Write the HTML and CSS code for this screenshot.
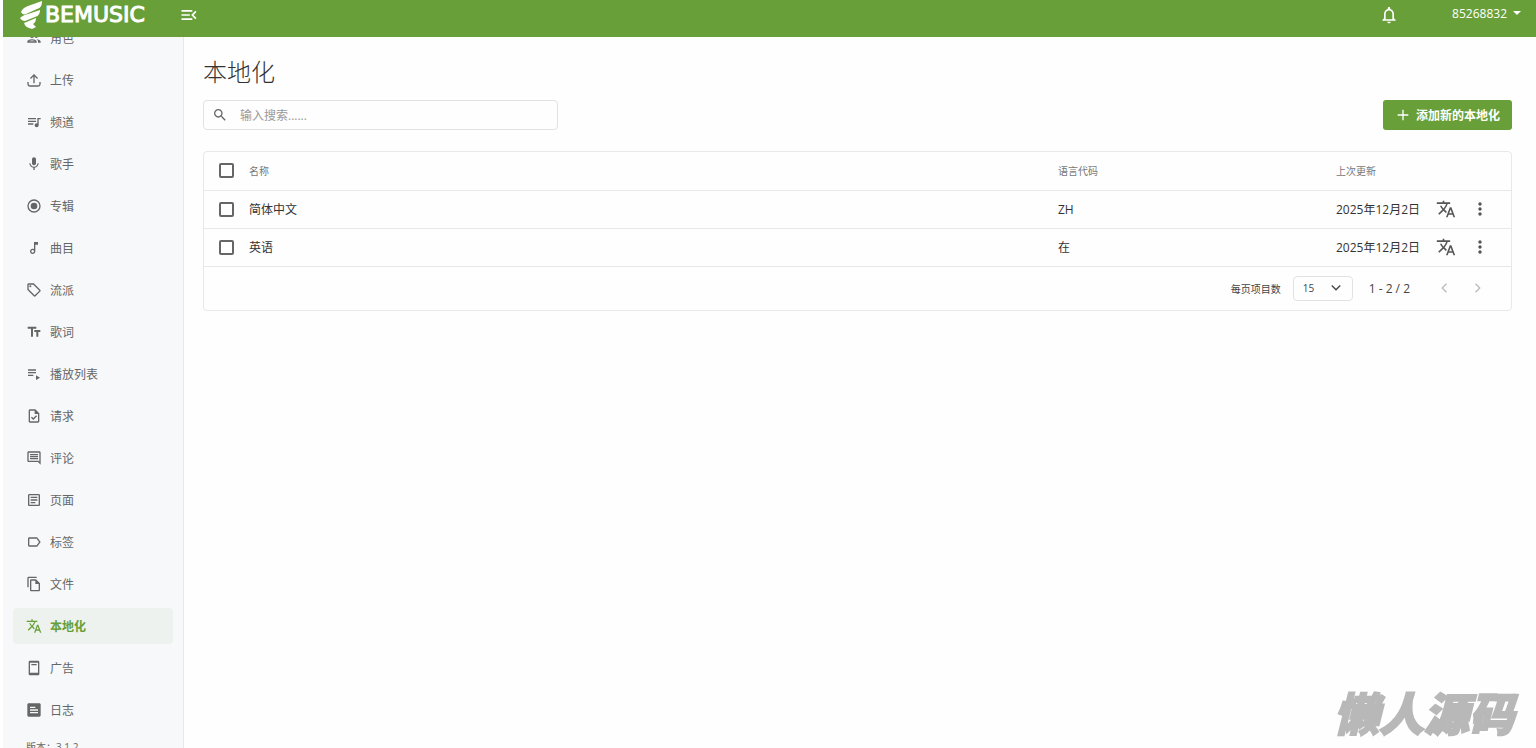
FILE: index.html
```html
<!DOCTYPE html>
<html lang="zh-CN">
<head>
    <meta charset="UTF-8">
    <meta name="viewport" content="width=device-width, initial-scale=1">
    <title>本地化</title>
    <link rel="stylesheet" href="styles.css">
</head>
<body>
    <svg class="sprite" aria-hidden="true">
        <symbol id="translate" viewBox="0 0 24 24"><path d="M12.87 15.07l-2.54-2.51.03-.03c1.74-1.94 2.98-4.17 3.71-6.53H17V4h-7V2H8v2H1v1.99h11.17C11.5 7.92 10.44 9.75 9 11.35 8.07 10.32 7.3 9.19 6.69 8h-2c.73 1.63 1.73 3.17 2.98 4.56l-5.09 5.02L4 19l5-5 3.11 3.11.76-2.04zM18.5 10h-2L12 22h2l1.12-3h4.75L21 22h2l-4.5-12zm-2.62 7l1.62-4.33L19.12 17h-3.24z"/></symbol>
        <symbol id="more" viewBox="0 0 24 24"><path d="M12 8c1.1 0 2-.9 2-2s-.9-2-2-2-2 .9-2 2 .9 2 2 2zm0 2c-1.1 0-2 .9-2 2s.9 2 2 2 2-.9 2-2-.9-2-2-2zm0 6c-1.1 0-2 .9-2 2s.9 2 2 2 2-.9 2-2-.9-2-2-2z"/></symbol>
    </svg>

    <header class="topbar">
        <a href="#" class="logo">
            <svg class="logo-mark" viewBox="0 0 24 30"><path d="M1 12C2 9 5 7 8 6L22 1C22 5 21 8 17 9L6 14C4 15 2 14 1 12zM0 18C2 16 4 15 8 14L20 10C20 13 19 16 15 17L5 21C3 21 1 20 0 18zM4 23L16 18C16 21 15 23 13 24L16 27L12 29C9 28 5 27 4 23z"/></svg>
            <span>BEMUSIC</span>
        </a>
        <button class="icon-btn menu-btn" aria-label="菜单">
            <svg class="icon-lg" viewBox="0 0 24 24"><path d="M3 18h13v-2H3v2zm0-5h10v-2H3v2zm0-7v2h13V6H3zm18 9.59L17.42 12 21 8.41 19.59 7l-5 5 5 5L21 15.59z"/></svg>
        </button>
        <button class="icon-btn bell-btn" aria-label="通知">
            <svg class="icon-lg" viewBox="0 0 24 24"><path d="M12 22c1.1 0 2-.9 2-2h-4c0 1.1.9 2 2 2zm6-6v-5c0-3.07-1.63-5.64-4.5-6.32V4c0-.83-.67-1.5-1.5-1.5s-1.5.67-1.5 1.5v.68C7.64 5.36 6 7.92 6 11v5l-2 2v1h16v-1l-2-2zm-2 1H8v-6c0-2.48 1.51-4.5 4-4.5s4 2.02 4 4.5v6z"/></svg>
        </button>
        <button class="user-btn">85268832
            <svg class="icon" viewBox="0 0 24 24"><path d="M6 9l6 6 6-6z"/></svg>
        </button>
    </header>

    <div class="layout">
        <aside class="sidebar">
            <nav class="nav">
                <a href="#"><svg class="icon" viewBox="0 0 24 24"><path d="M9 13.75c-2.34 0-7 1.17-7 3.5V19h14v-1.75c0-2.33-4.66-3.5-7-3.5zM4.34 17c.84-.58 2.87-1.25 4.66-1.25s3.82.67 4.66 1.25H4.34zM9 12c1.93 0 3.5-1.57 3.5-3.5S10.93 5 9 5 5.5 6.57 5.5 8.5 7.07 12 9 12zm7.04 1.81c1.16.84 1.96 1.96 1.96 3.44V19h4v-1.75c0-2.02-3.5-3.17-5.96-3.44zM15 12c1.93 0 3.5-1.57 3.5-3.5S16.93 5 15 5c-.54 0-1.04.13-1.5.35.63.89 1 1.98 1 3.15s-.37 2.26-1 3.15c.46.22.96.35 1.5.35z"/></svg>角色</a>
                <a href="#"><svg class="icon" viewBox="0 0 24 24"><path d="M20 15v3c0 1.1-.9 2-2 2H6c-1.1 0-2-.9-2-2v-3H2v3c0 2.2 1.8 4 4 4h12c2.2 0 4-1.8 4-4v-3h-2zM6 9l1.41 1.41L11 6.83V17h2V6.83l3.59 3.58L18 9l-6-6-6 6z"/></svg>上传</a>
                <a href="#"><svg class="icon" viewBox="0 0 24 24"><path d="M22 6h-5v8.18c-.31-.11-.65-.18-1-.18-1.66 0-3 1.34-3 3s1.34 3 3 3 3-1.34 3-3V8h3V6zM15 6H3v2h12V6zm0 4H3v2h12v-2zm-4 4H3v2h8v-2z"/></svg>频道</a>
                <a href="#"><svg class="icon" viewBox="0 0 24 24"><path d="M12 14c1.66 0 2.99-1.34 2.99-3L15 5c0-1.66-1.34-3-3-3S9 3.34 9 5v6c0 1.66 1.34 3 3 3zm5.3-3c0 3-2.54 5.1-5.3 5.1S6.7 14 6.7 11H5c0 3.41 2.72 6.23 6 6.72V21h2v-3.28c3.28-.48 6-3.3 6-6.72h-1.7z"/></svg>歌手</a>
                <a href="#"><svg class="icon" viewBox="0 0 24 24"><circle class="line" cx="12" cy="12" r="9"/><circle cx="12" cy="12" r="5"/></svg>专辑</a>
                <a href="#"><svg class="icon" viewBox="0 0 24 24"><path d="M12 3l.01 10.55c-.59-.34-1.27-.55-2-.55C7.79 13 6 14.79 6 17s1.79 4 4.01 4S14 19.21 14 17V7h4V3h-6zm-1.99 16c-1.1 0-2-.9-2-2s.9-2 2-2 2 .9 2 2-.9 2-2 2z"/></svg>曲目</a>
                <a href="#"><svg class="icon" viewBox="0 0 24 24"><path d="M21.41 11.58l-9-9C12.05 2.22 11.55 2 11 2H4c-1.1 0-2 .9-2 2v7c0 .55.22 1.05.59 1.42l9 9c.36.36.86.58 1.41.58s1.05-.22 1.41-.59l7-7c.37-.36.59-.86.59-1.41s-.23-1.06-.59-1.42zM13 20.01L4 11V4h7v-.01l9 9-7 7.02z"/><circle cx="6.5" cy="6.5" r="1.5"/></svg>流派</a>
                <a href="#"><svg class="icon" viewBox="0 0 24 24"><path d="M2.5 4v3h5v12h3V7h5V4h-13zm19 5h-9v3h3v7h3v-7h3V9z"/></svg>歌词</a>
                <a href="#"><svg class="icon" viewBox="0 0 24 24"><path d="M3 5h12v2H3zm0 4h12v2H3zm0 4h8v2H3zm12 1v7l6-3.5z"/></svg>播放列表</a>
                <a href="#"><svg class="icon" viewBox="0 0 24 24"><path d="M14 2H6c-1.1 0-1.99.9-1.99 2L4 20c0 1.1.89 2 1.99 2H18c1.1 0 2-.9 2-2V8l-6-6zm4 18H6V4h7v5h5v11zm-9.18-6.95L7.4 14.46 10.94 18l5.66-5.66-1.41-1.41-4.24 4.24-2.13-2.12z"/></svg>请求</a>
                <a href="#"><svg class="icon" viewBox="0 0 24 24"><path d="M21.99 4c0-1.1-.89-2-1.99-2H4c-1.1 0-2 .9-2 2v12c0 1.1.9 2 2 2h14l4 4-.01-18zM20 4v13.17L18.83 16H4V4h16zM6 12h12v2H6zm0-3h12v2H6zm0-3h12v2H6z"/></svg>评论</a>
                <a href="#"><svg class="icon" viewBox="0 0 24 24"><path d="M19 5v14H5V5h14m0-2H5c-1.1 0-2 .9-2 2v14c0 1.1.9 2 2 2h14c1.1 0 2-.9 2-2V5c0-1.1-.9-2-2-2zM14 17H7v-2h7v2zm3-4H7v-2h10v2zm0-4H7V7h10v2z"/></svg>页面</a>
                <a href="#"><svg class="icon" viewBox="0 0 24 24"><path d="M17.63 5.84C17.27 5.33 16.67 5 16 5L5 5.01C3.9 5.01 3 5.9 3 7v10c0 1.1.9 1.99 2 1.99L16 19c.67 0 1.27-.33 1.63-.84L22 12l-4.37-6.16zM16 17H5V7h11l3.55 5L16 17z"/></svg>标签</a>
                <a href="#"><svg class="icon" viewBox="0 0 24 24"><path d="M16 1H4c-1.1 0-2 .9-2 2v14h2V3h12V1zm-1 4H8c-1.1 0-1.99.9-1.99 2L6 21c0 1.1.89 2 1.99 2H19c1.1 0 2-.9 2-2V11l-6-6zM8 21V7h6v5h5v9H8z"/></svg>文件</a>
                <a href="#" class="active"><svg class="icon"><use href="#translate"/></svg>本地化</a>
                <a href="#"><svg class="icon" viewBox="0 0 24 24"><path d="M18 1H6c-1.1 0-2 .9-2 2v18c0 1.1.9 2 2 2h12c1.1 0 2-.9 2-2V3c0-1.1-.9-2-2-2zm0 18H6V4h12v15zM8 6h8v2H8z"/></svg>广告</a>
                <a href="#"><svg class="icon" viewBox="0 0 24 24"><path fill-rule="evenodd" d="M4 2h16c1.1 0 2 .9 2 2v16c0 1.1-.9 2-2 2H4c-1.1 0-2-.9-2-2V4c0-1.1.9-2 2-2zm2 5v2h8V7zm0 4v2h12v-2zm0 4v2h12v-2z"/></svg>日志</a>
            </nav>
            <div class="version">版本：3.1.2</div>
        </aside>

        <main class="content">
            <h1>本地化</h1>
            <div class="toolbar">
                <label class="search">
                    <svg class="icon" viewBox="0 0 24 24"><path d="M15.5 14h-.79l-.28-.27C15.41 12.59 16 11.11 16 9.5 16 5.91 13.09 3 9.5 3S3 5.91 3 9.5 5.91 16 9.5 16c1.61 0 3.09-.59 4.23-1.57l.27.28v.79l5 4.99L20.49 19l-4.99-5zm-6 0C7.01 14 5 11.99 5 9.5S7.01 5 9.5 5 14 7.01 14 9.5 11.99 14 9.5 14z"/></svg>
                    <input type="text" placeholder="输入搜索......" aria-label="搜索">
                </label>
                <button class="add-btn">
                    <svg class="icon" viewBox="0 0 24 24"><path d="M20 13h-7v7h-2v-7H4v-2h7V4h2v7h7v2z"/></svg>
                    添加新的本地化
                </button>
            </div>

            <div class="table-box">
                <table>
                    <thead>
                        <tr>
                            <th class="col-check"><input type="checkbox" aria-label="全选"></th>
                            <th>名称</th>
                            <th class="col-code">语言代码</th>
                            <th class="col-date">上次更新</th>
                            <th class="col-actions"></th>
                        </tr>
                    </thead>
                    <tbody>
                        <tr>
                            <td class="col-check"><input type="checkbox" aria-label="简体中文"></td>
                            <td>简体中文</td>
                            <td>ZH</td>
                            <td>2025年12月2日</td>
                            <td>
                                <div class="actions">
                                    <button class="icon-btn" aria-label="翻译"><svg class="icon-lg"><use href="#translate"/></svg></button>
                                    <button class="icon-btn" aria-label="更多"><svg class="icon-lg"><use href="#more"/></svg></button>
                                </div>
                            </td>
                        </tr>
                        <tr>
                            <td class="col-check"><input type="checkbox" aria-label="英语"></td>
                            <td>英语</td>
                            <td>在</td>
                            <td>2025年12月2日</td>
                            <td>
                                <div class="actions">
                                    <button class="icon-btn" aria-label="翻译"><svg class="icon-lg"><use href="#translate"/></svg></button>
                                    <button class="icon-btn" aria-label="更多"><svg class="icon-lg"><use href="#more"/></svg></button>
                                </div>
                            </td>
                        </tr>
                    </tbody>
                </table>
                <div class="pager">
                    <label for="per-page">每页项目数</label>
                    <div class="select">
                        <select id="per-page"><option>15</option><option>30</option><option>50</option></select>
                        <svg class="icon" viewBox="0 0 24 24"><path d="M6.41 7.59L12 13.17l5.59-5.58L19 9l-7 7-7-7z"/></svg>
                    </div>
                    <span class="range">1 - 2 / 2</span>
                    <button class="icon-btn" aria-label="上一页" disabled><svg class="icon" viewBox="0 0 24 24"><path d="M16.41 6.41L15 5l-7 7 7 7 1.41-1.41L10.83 12z"/></svg></button>
                    <button class="icon-btn" aria-label="下一页" disabled><svg class="icon" viewBox="0 0 24 24"><path d="M9 5L7.59 6.41 13.17 12l-5.58 5.59L9 19l7-7z"/></svg></button>
                </div>
            </div>
        </main>
    </div>

    <div class="watermark">懒人源码</div>
</body>
</html>
```

FILE: styles.css
```css
* {
    box-sizing: border-box;
}
body {
    margin: 0;
    padding-left: 3px;
    height: 100vh;
    display: flex;
    flex-direction: column;
    overflow: hidden;
    background-color: #fefefe;
    color: #333;
    font-family: "Open Sans", "Noto Sans CJK SC", sans-serif;
    font-size: 12px;
}
button, input, select {
    font: inherit;
    color: inherit;
}
button {
    padding: 0;
    border: none;
    background: none;
    cursor: pointer;
}
svg {
    fill: currentColor;
    flex-shrink: 0;
}
.sprite {
    display: none;
}
.icon {
    width: 16px;
    height: 16px;
}
.icon-lg {
    width: 20px;
    height: 20px;
}
.line {
    fill: none;
    stroke: currentColor;
    stroke-width: 2;
}
.icon-btn {
    display: flex;
}

/* top bar */
.topbar {
    display: flex;
    align-items: center;
    height: 37px;
    flex-shrink: 0;
    padding: 0 11px 7px 17px;
    background-color: #689f38;
    color: #fff;
}
.logo {
    display: flex;
    align-items: center;
    gap: 1px;
    width: 159px;
    color: #fff;
    font-family: "DejaVu Sans", sans-serif;
    font-size: 22px;
    line-height: 30px;
    text-decoration: none;
    -webkit-text-stroke: 1px #fff;
}
.logo-mark {
    width: 24px;
    height: 30px;
}
.bell-btn {
    margin-left: auto;
}
.user-btn {
    display: flex;
    align-items: center;
    gap: 2px;
    margin-left: 53px;
    padding-bottom: 4px;
}

/* sidebar */
.layout {
    display: flex;
    flex: 1;
    min-height: 0;
}
.sidebar {
    width: 181px;
    flex-shrink: 0;
    padding: 0 10px;
    overflow: hidden;
    background-color: #f6f8f9;
    border-right: 1px solid #e6e7e8;
    color: #666;
}
.nav {
    display: flex;
    flex-direction: column;
    gap: 6px;
    margin-top: -17px;
}
.nav a {
    display: flex;
    align-items: center;
    gap: 8px;
    height: 36px;
    padding: 0 13px;
    border-radius: 4px;
    color: #666;
    text-decoration: none;
}
.nav .active {
    background-color: #edf2ee;
    color: #689f38;
    font-weight: bold;
}
.version {
    padding: 11px 13px;
    font-size: 10px;
}

/* content */
.content {
    flex: 1;
    padding: 17px 24px 17px 19px;
}
h1 {
    margin: 0 0 10px;
    font-size: 24px;
    font-weight: 300;
    line-height: 36px;
}
.toolbar {
    display: flex;
    justify-content: space-between;
    margin-bottom: 21px;
}
.search {
    display: flex;
    align-items: center;
    gap: 12px;
    width: 355px;
    height: 30px;
    padding: 0 8px;
    border: 1px solid #e2e2e2;
    border-radius: 4px;
    color: #666;
}
.search input {
    flex: 1;
    padding: 0;
    border: none;
    outline: none;
    background: none;
}
.search input::placeholder {
    color: #999;
}
.add-btn {
    display: flex;
    align-items: center;
    gap: 5px;
    height: 30px;
    padding: 0 12px;
    border-radius: 3px;
    background-color: #689f38;
    color: #fff;
    font-weight: bold;
}

/* table */
.table-box {
    border: 1px solid #e8e8e8;
    border-radius: 4px;
}
table {
    width: 100%;
    table-layout: fixed;
    border-collapse: collapse;
}
th, td {
    height: 38px;
    padding: 0;
    border-bottom: 1px solid #e8e8e8;
    text-align: left;
}
th {
    color: #777;
    font-size: 10px;
    font-weight: normal;
}
.col-check {
    width: 45px;
    padding-left: 15px;
}
.col-code {
    width: 278px;
}
.col-date {
    width: 100px;
}
.col-actions {
    width: 75px;
}
input[type="checkbox"] {
    display: block;
    appearance: none;
    width: 15px;
    height: 15px;
    margin: 0;
    border: 2px solid #666;
    border-radius: 2px;
}
.actions {
    display: flex;
    gap: 14px;
    color: #555;
}
.pager {
    display: flex;
    align-items: center;
    justify-content: flex-end;
    height: 43px;
    padding-right: 25px;
    color: #444;
}
.pager label {
    font-size: 10px;
}
.select {
    display: grid;
    align-items: center;
    width: 60px;
    margin: 0 16px 0 12px;
}
.select select, .select svg {
    grid-area: 1 / 1;
}
.select select {
    appearance: none;
    width: 100%;
    height: 25px;
    padding: 0 9px;
    border: 1px solid #e2e2e2;
    border-radius: 4px;
    background: none;
    font-size: 10px;
}
.select svg {
    justify-self: end;
    margin-right: 9px;
    pointer-events: none;
}
.range {
    margin-right: 26px;
}
.pager .icon-btn {
    color: #bbb;
}
.pager .icon-btn + .icon-btn {
    margin-left: 18px;
}

.watermark {
    position: fixed;
    right: 22px;
    bottom: 12px;
    color: #b8b8b8;
    font-size: 45px;
    font-style: italic;
    font-weight: 900;
    line-height: 45px;
    -webkit-text-stroke: 2px #b8b8b8;
    pointer-events: none;
}
```
